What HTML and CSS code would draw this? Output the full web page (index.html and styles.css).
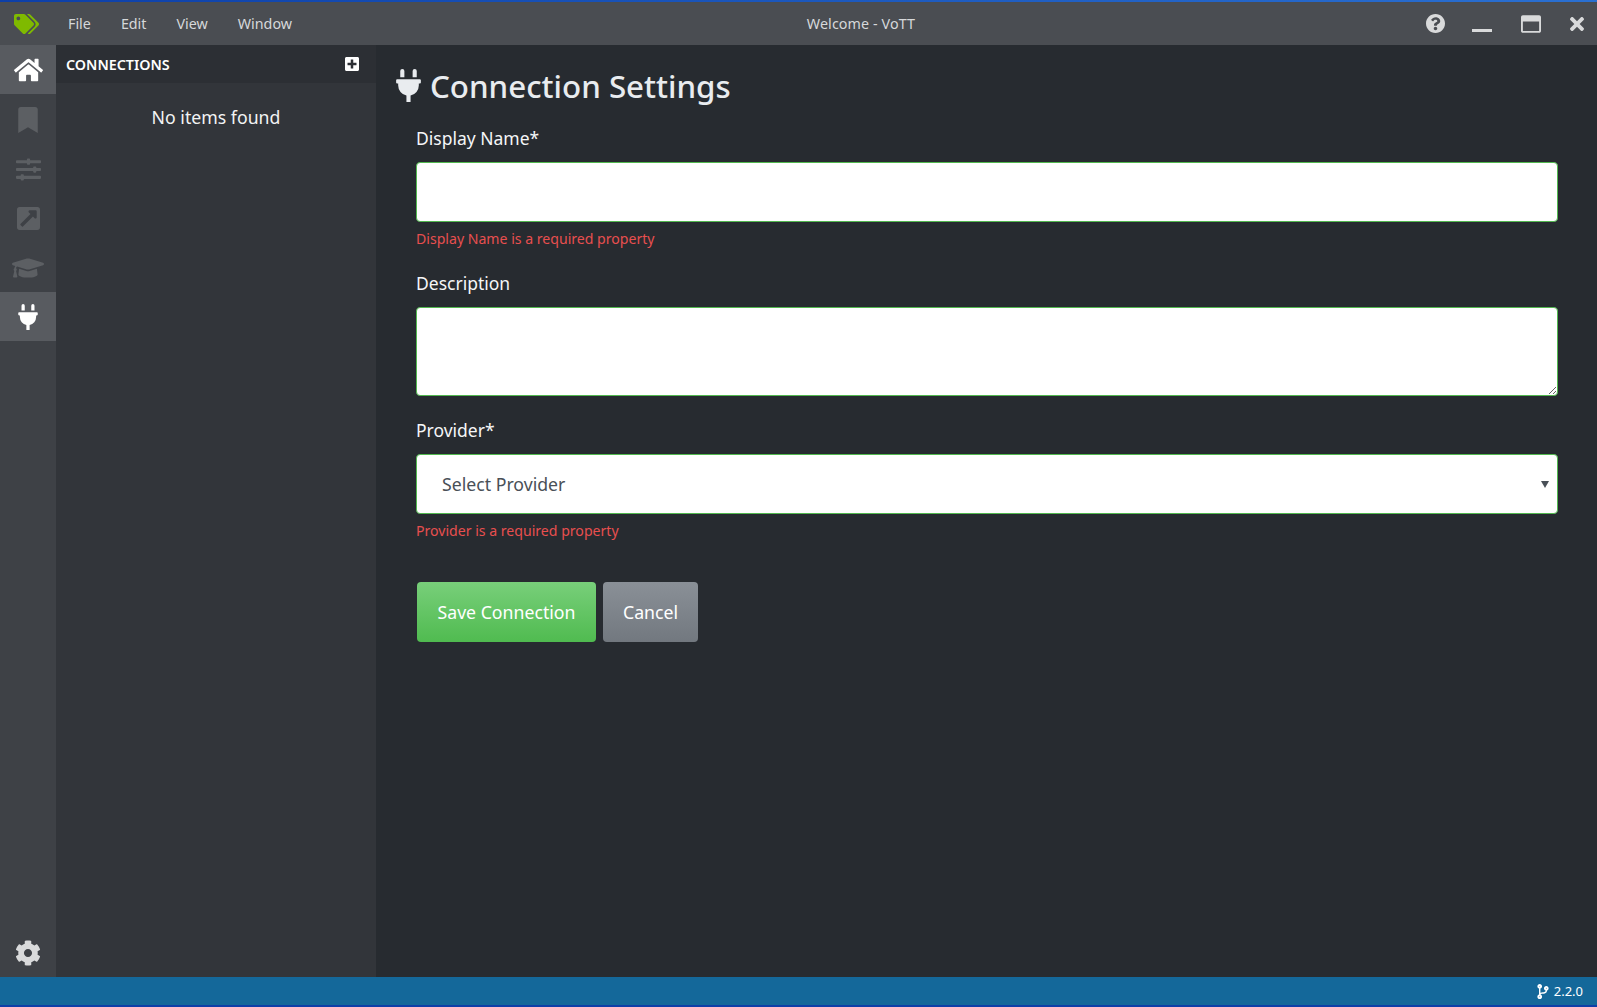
FILE: index.html
```html
<!DOCTYPE html>
<html lang="en">
<head>
<meta charset="utf-8">
<title>Welcome - VoTT</title>
<link rel="stylesheet" href="styles.css">
</head>
<body>
<div class="app">
  <header class="titlebar">
    <div class="logo"><svg class="logo-icon" viewBox="0 0 640 512"><path d="M497.941 225.941L286.059 14.059A48 48 0 0 0 252.118 0H48C21.49 0 0 21.49 0 48v204.118a48 48 0 0 0 14.059 33.941l211.882 211.882c18.744 18.745 49.136 18.746 67.882 0l204.118-204.118c18.745-18.745 18.745-49.137 0-67.882zM112 160c-26.51 0-48-21.49-48-48s21.49-48 48-48 48 21.49 48 48-21.49 48-48 48zm513.941 133.823L421.823 497.941c-18.745 18.745-49.137 18.745-67.882 0l-.36-.36L527.64 323.522c16.999-16.999 26.36-39.6 26.36-63.64s-9.362-46.641-26.36-63.64L331.397 0h48.721a48 48 0 0 1 33.941 14.059l211.882 211.882c18.745 18.745 18.745 49.137 0 67.882z"/></svg></div>
    <nav class="menu"><span>File</span><span>Edit</span><span>View</span><span>Window</span></nav>
    <div class="title">Welcome - VoTT</div>
    <div class="controls">
      <svg class="ctl-help" viewBox="8 8 496 496"><path d="M504 256c0 136.997-111.043 248-248 248S8 392.997 8 256C8 119.083 119.043 8 256 8s248 111.083 248 248zM262.655 90c-54.497 0-89.255 22.957-116.549 63.758-3.536 5.286-2.353 12.415 2.715 16.258l34.699 26.31c5.205 3.947 12.621 3.008 16.665-2.122 17.864-22.658 30.113-35.797 57.303-35.797 20.429 0 45.698 13.148 45.698 32.958 0 14.976-12.363 22.667-32.534 33.976C247.128 238.528 216 254.941 216 296v4c0 6.627 5.373 12 12 12h56c6.627 0 12-5.373 12-12v-1.333c0-28.462 83.186-29.647 83.186-106.667 0-58.002-60.165-102-116.531-102zM256 338c-25.365 0-46 20.635-46 46 0 25.364 20.635 46 46 46s46-20.636 46-46c0-25.365-20.635-46-46-46z"/></svg>
      <span class="ctl-min"></span>
      <svg class="ctl-max" viewBox="0 32 512 448"><path d="M464 32H48C21.5 32 0 53.5 0 80v352c0 26.5 21.5 48 48 48h416c26.5 0 48-21.5 48-48V80c0-26.5-21.5-48-48-48zm0 394c0 3.3-2.7 6-6 6H54c-3.3 0-6-2.7-6-6V192h416v234z"/></svg>
      <svg class="ctl-close" viewBox="0 80 352 352"><path d="M242.72 256l100.07-100.07c12.28-12.28 12.28-32.19 0-44.48l-22.24-22.24c-12.28-12.28-32.19-12.28-44.48 0L176 189.28 75.93 89.21c-12.28-12.28-32.19-12.28-44.48 0L9.21 111.45c-12.28 12.28-12.28 32.19 0 44.48L109.28 256 9.21 356.07c-12.28 12.28-12.28 32.19 0 44.48l22.24 22.24c12.28 12.28 32.2 12.28 44.48 0L176 322.72l100.07 100.07c12.28 12.28 32.2 12.28 44.48 0l22.24-22.24c12.28-12.28 12.28-32.19 0-44.48L242.72 256z"/></svg>
    </div>
  </header>
  <div class="body">
    <aside class="rail">
      <a class="rail-item active home"><svg class="ic-home" viewBox="0 0 576 512"><path d="M280.37 148.26L96 300.11V464a16 16 0 0 0 16 16l112.06-.29a16 16 0 0 0 15.92-16V368a16 16 0 0 1 16-16h64a16 16 0 0 1 16 16v95.64a16 16 0 0 0 16 16.05L464 480a16 16 0 0 0 16-16V300L295.67 148.26a12.19 12.19 0 0 0-15.3 0zM571.6 251.47L488 182.56V44.05a12 12 0 0 0-12-12h-56a12 12 0 0 0-12 12v72.61L318.47 43a48 48 0 0 0-61 0L4.34 251.47a12 12 0 0 0-1.6 16.9l25.5 31A12 12 0 0 0 45.15 301l235.22-193.74a12.19 12.19 0 0 1 15.3 0L530.9 301a12 12 0 0 0 16.9-1.6l25.5-31a12 12 0 0 0-1.7-16.93z"/></svg></a>
      <a class="rail-item low"><svg class="ic-book" viewBox="0 0 384 512"><path d="M0 512V48C0 21.49 21.49 0 48 0h288c26.51 0 48 21.49 48 48v464L192 400 0 512z"/></svg></a>
      <a class="rail-item low"><svg class="ic-sliders" viewBox="0 0 512 512"><path d="M496 384H160v-16c0-8.8-7.2-16-16-16h-32c-8.8 0-16 7.2-16 16v16H16c-8.8 0-16 7.2-16 16v32c0 8.8 7.2 16 16 16h80v16c0 8.8 7.2 16 16 16h32c8.8 0 16-7.2 16-16v-16h336c8.8 0 16-7.2 16-16v-32c0-8.8-7.2-16-16-16zm0-160h-80v-16c0-8.8-7.2-16-16-16h-32c-8.8 0-16 7.2-16 16v16H16c-8.8 0-16 7.2-16 16v32c0 8.8 7.2 16 16 16h336v16c0 8.8 7.2 16 16 16h32c8.8 0 16-7.2 16-16v-16h80c8.8 0 16-7.2 16-16v-32c0-8.8-7.2-16-16-16zm0-160H288V48c0-8.8-7.2-16-16-16h-32c-8.8 0-16 7.2-16 16v16H16C7.2 64 0 71.2 0 80v32c0 8.8 7.2 16 16 16h208v16c0 8.8 7.2 16 16 16h32c8.8 0 16-7.2 16-16v-16h208c8.8 0 16-7.2 16-16V80c0-8.8-7.2-16-16-16z"/></svg></a>
      <a class="rail-item low"><svg class="ic-ext" viewBox="0 32 448 448"><path d="M448 80v352c0 26.51-21.49 48-48 48H48c-26.51 0-48-21.49-48-48V80c0-26.51 21.49-48 48-48h352c26.51 0 48 21.49 48 48zm-88 16H248.029c-21.313 0-32.08 25.861-16.971 40.971l31.984 31.987L67.515 364.485c-4.686 4.686-4.686 12.284 0 16.971l31.029 31.029c4.687 4.686 12.285 4.686 16.971 0l195.526-195.526 31.988 31.991C357.058 263.977 384 253.425 384 231.979V120c0-13.255-10.745-24-24-24z"/></svg></a>
      <a class="rail-item low"><svg class="ic-cap" viewBox="0 64 640 384"><path d="M622.34 153.2L343.4 67.5c-15.2-4.67-31.6-4.67-46.79 0L17.66 153.2c-23.54 7.23-23.54 38.36 0 45.59l48.63 14.94c-10.67 13.19-17.23 29.28-17.88 46.9C38.78 266.15 32 276.11 32 288c0 10.78 5.68 19.85 13.86 25.65L20.33 428.53C18.11 438.52 25.71 448 35.94 448h56.11c10.24 0 17.84-9.48 15.62-19.47L82.14 313.65C90.32 307.85 96 298.78 96 288c0-11.57-6.47-21.25-15.66-26.87.76-15.02 8.44-28.3 20.69-36.72L296.6 284.5c9.06 2.78 26.44 6.25 46.79 0l278.95-85.7c23.55-7.24 23.55-38.36 0-45.6zM352.79 315.09c-28.53 8.76-52.84 3.92-65.59 0l-145.02-44.55L128 384c0 35.35 85.96 64 192 64s192-28.65 192-64l-14.18-113.47-145.03 44.56z"/></svg></a>
      <a class="rail-item active"><svg class="ic-plug" viewBox="0 0 384 512"><path d="M320,32a32,32,0,0,0-64,0v96h64Zm48,128H16A16,16,0,0,0,0,176v32a16,16,0,0,0,16,16H32v32A160.07,160.07,0,0,0,160,412.8V512h64V412.8A160.07,160.07,0,0,0,352,256V224h16a16,16,0,0,0,16-16V176A16,16,0,0,0,368,160ZM128,32a32,32,0,0,0-64,0v96h64Z"/></svg></a>
      <a class="rail-item low rail-gear"><svg class="ic-cog" viewBox="0 0 512 512"><path d="M487.4 315.7l-42.6-24.6c4.3-23.2 4.3-47 0-70.2l42.6-24.6c4.9-2.8 7.1-8.6 5.5-14-11.1-35.6-30-67.8-54.7-94.6-3.8-4.1-10-5.1-14.8-2.3L380.8 110c-17.9-15.4-38.5-27.3-60.8-35.1V25.8c0-5.6-3.9-10.5-9.4-11.7-36.7-8.2-74.3-7.8-109.2 0-5.5 1.2-9.4 6.1-9.4 11.7V75c-22.2 7.9-42.8 19.8-60.8 35.1L88.7 85.5c-4.9-2.8-11-1.9-14.8 2.3-24.7 26.7-43.6 58.9-54.7 94.6-1.7 5.4.6 11.2 5.5 14L67.3 221c-4.3 23.2-4.3 47 0 70.2l-42.6 24.6c-4.9 2.8-7.1 8.6-5.5 14 11.1 35.6 30 67.8 54.7 94.6 3.8 4.1 10 5.1 14.8 2.3l42.6-24.6c17.9 15.4 38.5 27.3 60.8 35.1v49.2c0 5.6 3.9 10.5 9.4 11.7 36.7 8.2 74.3 7.8 109.2 0 5.5-1.2 9.4-6.1 9.4-11.7v-49.2c22.2-7.9 42.8-19.8 60.8-35.1l42.6 24.6c4.9 2.8 11 1.9 14.8-2.3 24.7-26.7 43.6-58.9 54.7-94.6 1.5-5.5-.7-11.3-5.6-14.1zM256 336c-44.1 0-80-35.9-80-80s35.9-80 80-80 80 35.9 80 80-35.9 80-80 80z"/></svg></a>
    </aside>
    <section class="panel">
      <div class="panel-head">
        <span class="panel-title">CONNECTIONS</span>
        <svg class="ic-plus" viewBox="0 32 448 448"><path d="M400 32H48C21.5 32 0 53.5 0 80v352c0 26.5 21.5 48 48 48h352c26.5 0 48-21.5 48-48V80c0-26.5-21.5-48-48-48zm-32 252c0 6.6-5.4 12-12 12h-92v92c0 6.6-5.4 12-12 12h-56c-6.6 0-12-5.4-12-12v-92H92c-6.6 0-12-5.4-12-12v-56c0-6.6 5.4-12 12-12h92v-92c0-6.6 5.4-12 12-12h56c6.6 0 12 5.4 12 12v92h92c6.6 0 12 5.4 12 12v56z"/></svg>
      </div>
      <div class="panel-empty">No items found</div>
    </section>
    <main class="main">
      <h1 class="heading"><svg class="ic-h1" viewBox="0 0 384 512"><path d="M320,32a32,32,0,0,0-64,0v96h64Zm48,128H16A16,16,0,0,0,0,176v32a16,16,0,0,0,16,16H32v32A160.07,160.07,0,0,0,160,412.8V512h64V412.8A160.07,160.07,0,0,0,352,256V224h16a16,16,0,0,0,16-16V176A16,16,0,0,0,368,160ZM128,32a32,32,0,0,0-64,0v96h64Z"/></svg><span>Connection Settings</span></h1>
      <form class="form">
        <div class="group g-name">
          <label class="label">Display Name*</label>
          <input class="field field-input" type="text">
          <div class="error">Display Name is a required property</div>
        </div>
        <div class="group g-desc">
          <label class="label">Description</label>
          <textarea class="field field-area"></textarea>
        </div>
        <div class="group g-prov">
          <label class="label">Provider*</label>
          <div class="select-wrap">
            <select class="field field-select"><option>Select Provider</option></select>
          </div>
          <div class="error">Provider is a required property</div>
        </div>
        <div class="actions">
          <button type="button" class="btn btn-save">Save Connection</button>
          <button type="button" class="btn btn-cancel">Cancel</button>
        </div>
      </form>
    </main>
  </div>
  <footer class="status">
    <svg class="ic-branch" viewBox="0 0 384 512"><path d="M384 144c0-44.2-35.8-80-80-80s-80 35.8-80 80c0 36.4 24.3 67.1 57.5 76.8-.6 16.1-4.2 28.5-11 36.9-15.4 19.2-49.3 22.4-85.2 25.7-28.2 2.6-57.4 5.4-81.3 16.9v-144c32.5-10.2 56-40.5 56-76.3 0-44.2-35.8-80-80-80S0 35.8 0 80c0 35.8 23.5 66.1 56 76.3v199.3C23.5 365.9 0 396.2 0 432c0 44.2 35.8 80 80 80s80-35.8 80-80c0-34-21.2-63.1-51.2-74.6 3.1-5.2 7.8-9.8 14.9-13.4 16.2-8.2 40.4-10.4 66.1-12.8 42.2-3.9 90-8.4 118.2-43.4 14-17.4 21.1-39.8 21.6-67.9 31.6-10.8 54.4-40.7 54.4-75.9zM80 64c8.8 0 16 7.2 16 16s-7.2 16-16 16-16-7.2-16-16 7.2-16 16-16zm0 384c-8.8 0-16-7.2-16-16s7.2-16 16-16 16 7.2 16 16-7.2 16-16 16zm224-320c8.8 0 16 7.2 16 16s-7.2 16-16 16-16-7.2-16-16 7.2-16 16-16z"/></svg>
    <span>2.2.0</span>
  </footer>
</div>
</body>
</html>
```
FILE: styles.css
```css
* { box-sizing: border-box; }
html, body { margin: 0; height: 100%; overflow: hidden; }
body { font-family: "Noto Sans", "Open Sans", sans-serif; background: #272b30; color: #fff; }
svg { display: block; fill: currentColor; flex: none; }
.app { display: flex; flex-direction: column; height: 100vh; }

.titlebar { height: 45px; flex: none; display: flex; align-items: center; background: #4a4d52; border-style: solid; border-width: 2px 0 0; border-image: linear-gradient(90deg, #0d3fa8, #2a70d2) 1; color: #d6d8da; font-size: 14.3px; }
.logo { width: 56px; flex: none; display: flex; padding-left: 14px; }
.logo-icon { width: 25px; height: 20px; color: #7fba00; }
.menu { display: flex; gap: 30px; padding-left: 12px; }
.title { flex: 1; text-align: center; padding-left: 4px; letter-spacing: 0.1px; }
.controls { display: flex; align-items: center; color: #d9dadb; padding-right: 13px; }
.ctl-help { width: 19px; height: 19px; }
.ctl-min { width: 20px; height: 3px; background: currentColor; margin: 14px 0 0 27px; }
.ctl-max { width: 20px; height: 18px; margin-left: 29px; }
.ctl-close { width: 14px; height: 14px; margin-left: 29px; }

.body { flex: 1; display: flex; min-height: 0; }
.rail { width: 56px; flex: none; display: flex; flex-direction: column; background: #3e4146; color: #5c5f63; }
.rail-item { height: 49.4px; flex: none; display: flex; align-items: center; justify-content: center; }
.rail-item.low { padding-top: 2px; }
.rail-item.home { padding-top: 1px; }
.rail-item.active { background: #585b60; color: #fff; }
.rail-gear { margin-top: auto; color: #d9dadb; }
.ic-home { width: 29px; height: 26px; }
.ic-book { width: 20px; height: 26px; }
.ic-sliders { width: 25px; height: 25px; }
.ic-ext { width: 23px; height: 23px; }
.ic-cap { width: 32px; height: 20px; }
.ic-plug { width: 20px; height: 26px; }
.ic-cog { width: 26px; height: 26px; }

.panel { width: 320px; flex: none; background: #32353a; }
.panel-head { height: 38px; background: #2c2f34; display: flex; align-items: center; justify-content: space-between; padding: 0 17px 0 10px; }
.panel-title { font-size: 14.3px; font-weight: 600; color: #fff; }
.ic-plus { width: 14px; height: 14px; color: #fff; }
.panel-empty { text-align: center; padding-top: 22px; font-size: 17.7px; line-height: 24px; color: #f2f3f4; }

.main { flex: 1; min-width: 0; background: #272b30; padding: 21px 39px 0 20px; }
.heading { margin: 0; display: flex; align-items: center; gap: 9px; font-size: 31.3px; font-weight: 500; line-height: 40px; color: #e9ecef; }
.ic-h1 { width: 25px; height: 33px; margin-top: -2px; }
.form { padding: 20px 0 0 20px; }
.group { display: flex; flex-direction: column; }
.label { font-size: 17.5px; line-height: 24px; color: #f5f6f7; margin-bottom: 12px; }
.field { width: 100%; display: block; background: #fff; border: 1px solid #52b84f; border-radius: 4px; font: inherit; outline: 0; }
.field-input { height: 60px; }
.field-area { height: 89px; resize: vertical; }
.select-wrap { position: relative; }
.select-wrap::after { content: ""; position: absolute; right: 9px; top: 27px; border: 4px solid transparent; border-top: 7px solid #495057; border-bottom: 0; }
.field-select { height: 60px; appearance: none; padding: 0 25px; font-size: 17.7px; color: #495057; }
.error { font-size: 14.1px; line-height: 20px; color: #e84f4f; margin-top: 7px; }
.g-name { margin-bottom: 22px; }
.g-desc { margin-bottom: 22px; }
.actions { display: flex; gap: 7px; margin-top: 41px; padding-left: 1px; }
.btn { height: 60px; border: 0; border-radius: 4px; font: inherit; font-size: 17.7px; color: #fff; padding: 0; }
.btn-save { width: 179px; background: linear-gradient(180deg, #78cf7a, #50bb50); }
.btn-cancel { width: 95px; background: linear-gradient(180deg, #8a9097, #72787f); }

.status { height: 30px; flex: none; background: #14689a; border-bottom: 2px solid #0d3fa8; display: flex; align-items: center; justify-content: flex-end; gap: 5px; padding-right: 14px; font-size: 13px; color: #fff; }
.ic-branch { width: 12px; height: 15px; }
```
